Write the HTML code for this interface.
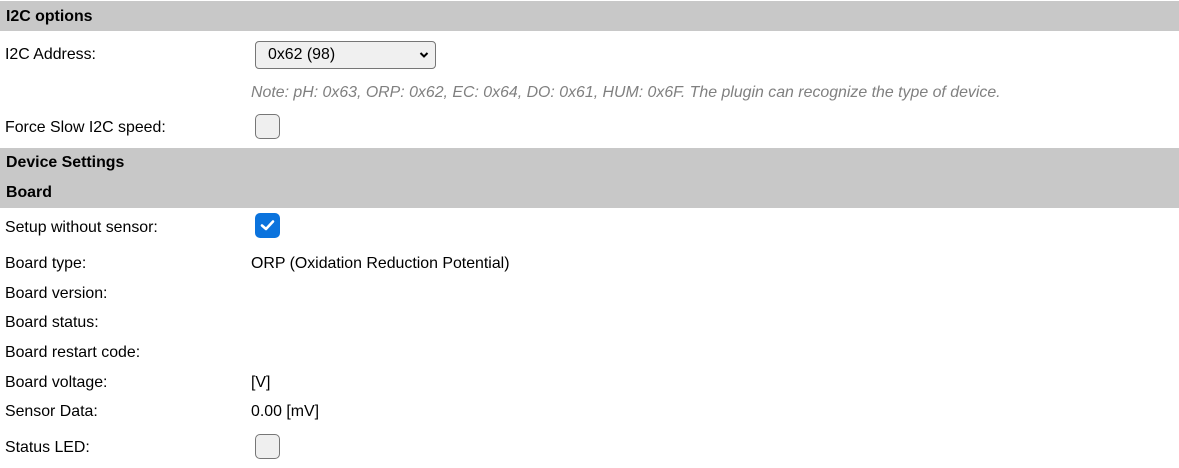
<!DOCTYPE html>
<html><head><style>
body{margin:0;width:1179px;height:468px;background:#fff;font-family:"Liberation Sans",Arial,sans-serif;font-size:15.9px;color:#000;position:relative;overflow:hidden}
.bar{position:absolute;left:0;width:1179px;background:#c8c8c8;font-weight:bold;box-sizing:border-box;padding-left:6px}
.t{position:absolute;left:5px;line-height:18px}
.v{position:absolute;left:251px;line-height:18px}
.cb{position:absolute;left:255px;width:25px;height:25px;border:1px solid #767676;border-radius:5px;background:#efefef;box-sizing:border-box}
.cbc{background:#0b73dd;border-color:#0b73dd}
.sel{position:absolute;left:255px;top:41px;width:181px;height:28px;border:1px solid #767676;border-radius:4px;box-sizing:border-box;background:#f0f0f0;padding-left:12px;line-height:26px}
</style></head><body>
<div class="bar" style="top:1px;height:30px;line-height:31px">I2C options</div>
<div class="t" style="top:46px">I2C Address:</div>
<div class="sel">0x62 (98)<svg style="position:absolute;right:6px;top:9px" width="10" height="8" viewBox="0 0 10 8"><path d="M1.5 2 L5 5.5 L8.5 2" stroke="#000" stroke-width="2" fill="none"/></svg></div>
<div class="v" style="top:84px;color:#808080;font-style:italic">Note: pH: 0x63, ORP: 0x62, EC: 0x64, DO: 0x61, HUM: 0x6F. The plugin can recognize the type of device.</div>
<div class="t" style="top:119px">Force Slow I2C speed:</div>
<div class="cb" style="top:114px"></div>
<div class="bar" style="top:148px;height:30px;line-height:29px">Device Settings</div>
<div class="bar" style="top:178px;height:30px;line-height:29px">Board</div>
<div class="t" style="top:219px">Setup without sensor:</div>
<div class="cb cbc" style="top:213px"><svg width="23" height="23" viewBox="0 0 23 23" style="position:absolute;left:0;top:0"><path d="M6 11.5 L10 15 L17 7.5" stroke="#fff" stroke-width="2.6" fill="none" stroke-linecap="round" stroke-linejoin="round"/></svg></div>
<div class="t" style="top:255px">Board type:</div>
<div class="v" style="top:255px">ORP (Oxidation Reduction Potential)</div>
<div class="t" style="top:285px">Board version:</div>
<div class="t" style="top:314px">Board status:</div>
<div class="t" style="top:344px">Board restart code:</div>
<div class="t" style="top:374px">Board voltage:</div>
<div class="v" style="top:374px">[V]</div>
<div class="t" style="top:403px">Sensor Data:</div>
<div class="v" style="top:403px">0.00 [mV]</div>
<div class="t" style="top:439px">Status LED:</div>
<div class="cb" style="top:434px"></div>
</body></html>
